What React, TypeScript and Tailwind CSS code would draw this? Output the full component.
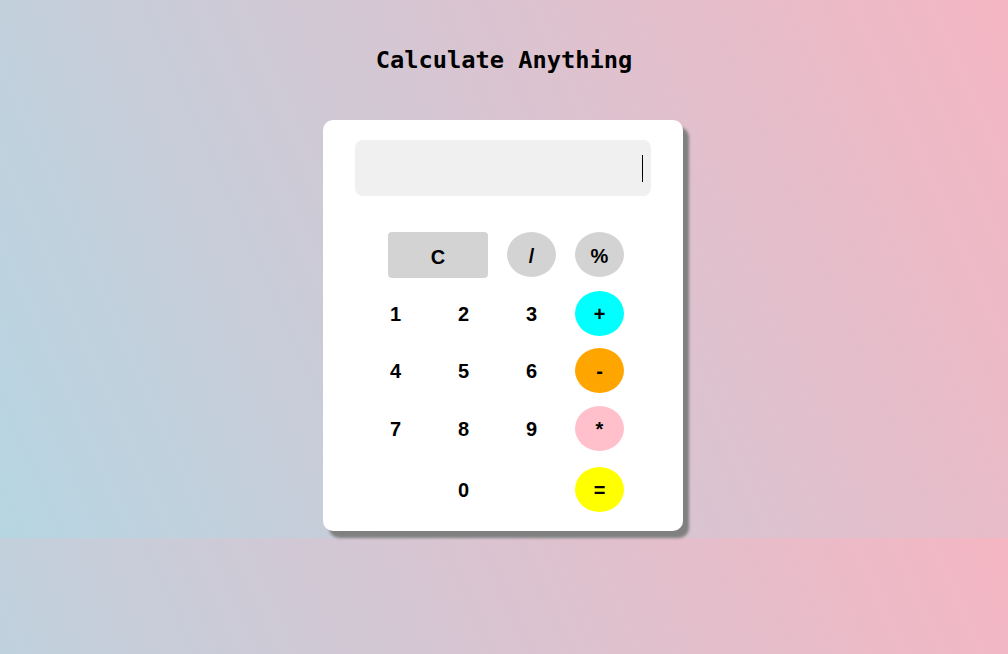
import React from "react"

const ROWS = [
  { keys: ["1", "2", "3"], op: "+", color: "bg-[#00ffff]", mt: "mt-[13px]" },
  { keys: ["4", "5", "6"], op: "-", color: "bg-[#ffa500]", mt: "mt-[12px]" },
  { keys: ["7", "8", "9"], op: "*", color: "bg-[#ffc0cb]", mt: "mt-[13px]" },
  { keys: ["", "0", ""], op: "=", color: "bg-[#ffff00]", mt: "mt-[16px]" },
] as const

const keyText = "font-['Liberation_Sans',Arial,sans-serif] text-[20px] font-bold text-black"

export default function App() {
  return (
    <div className="min-h-screen bg-[linear-gradient(66deg,#b6d6e2,#f5b6c3)] bg-[length:100%_538px] bg-repeat">
      <h2 className="pt-[46px] text-center font-['DejaVu_Sans_Mono',monospace] text-[23.7px] leading-[28px] font-bold text-black">
        Calculate Anything
      </h2>

      <div className="mx-auto mt-[46px] w-[360px] -translate-x-px rounded-[10px] bg-white px-[32px] pt-[20px] pb-[19px] shadow-[6px_7px_3px_#808080]">
        <div className="flex h-[56px] items-center justify-end rounded-[8px] bg-[#f0f0f0] pr-[8px]">
          <span className="h-[27px] w-px bg-black" />
        </div>

        <div className="mt-[36px] ml-[16px]">
          <div className="flex items-start gap-[19px]">
            <button className={`ml-[17px] h-[46px] w-[100px] rounded-[4px] bg-[#d3d3d3] pt-[3px] ${keyText}`}>C</button>
            <button className={`h-[45px] w-[49px] rounded-[50%] bg-[#d3d3d3] pt-[2px] ${keyText}`}>/</button>
            <button className={`h-[45px] w-[49px] rounded-[50%] bg-[#d3d3d3] pt-[2px] ${keyText}`}>%</button>
          </div>

          {ROWS.map((row) => (
            <div key={row.op} className={`flex gap-[19px] ${row.mt}`}>
              {row.keys.map((k, i) => (
                <button key={i} className={`h-[45px] w-[49px] ${keyText}`}>
                  {k}
                </button>
              ))}
              <button className={`h-[45px] w-[49px] rounded-[50%] ${row.color} ${keyText}`}>{row.op}</button>
            </div>
          ))}
        </div>
      </div>
    </div>
  )
}
